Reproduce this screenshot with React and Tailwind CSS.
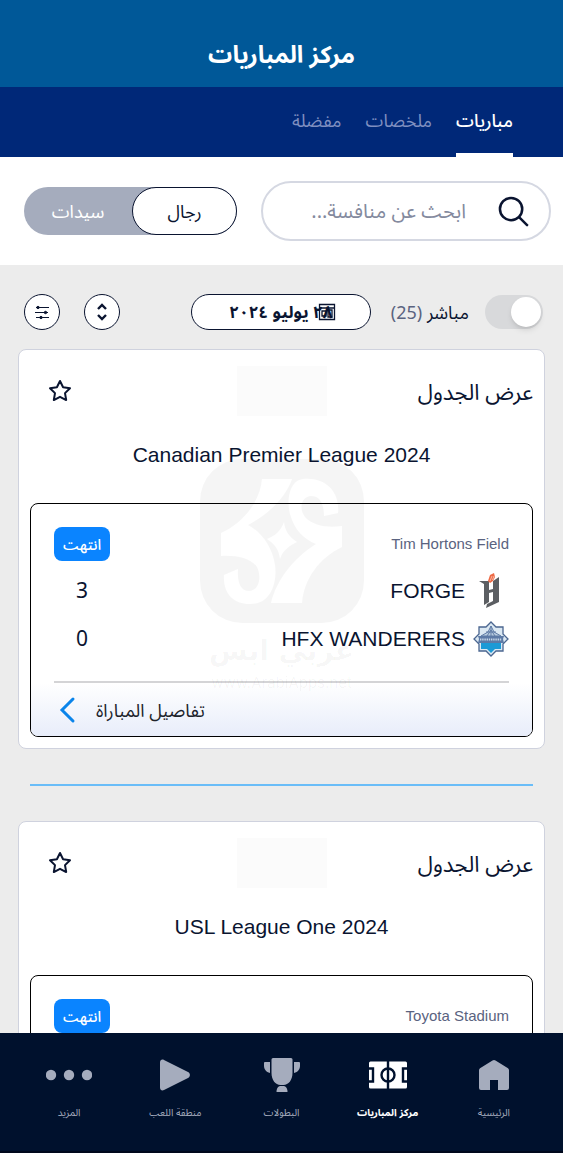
import { useState } from "react";

const tabs = ["مباريات", "ملخصات", "مفضلة"];

const leagues = [
    {
        name: "Canadian Premier League 2024",
        venue: "Tim Hortons Field",
        teams: [
            { name: "FORGE", score: "3", logo: <ForgeLogo /> },
            { name: "HFX WANDERERS", score: "0", logo: <WanderersLogo /> },
        ],
    },
    {
        name: "USL League One 2024",
        venue: "Toyota Stadium",
        teams: [],
    },
];

const navItems = [
    { label: "الرئيسية", icon: <HomeIcon /> },
    { label: "مركز المباريات", icon: <PitchIcon />, active: true },
    { label: "البطولات", icon: <TrophyIcon /> },
    { label: "منطقة اللعب", icon: <PlayIcon /> },
    { label: "المزيد", icon: <MoreIcon /> },
];

function ForgeLogo() {
    return (
        <svg viewBox="0 0 36 36" className="size-9" aria-hidden="true">
            <path d="M6 8h10v9l4-1V8l6-4v25l-13 6 1-4 6-3v-9l-4 1v9l-5 3V11z" fill="#5b5e62" />
            <path d="M15 8l2-6 4-2 1 4-2 4-3 2z" fill="#ee6a45" />
            <path d="M17 8l2-5M19.500 7l1.500-4" stroke="#fff" strokeWidth="0.5" />
        </svg>
    );
}

function WanderersLogo() {
    return (
        <svg viewBox="0 0 36 36" className="size-9" aria-hidden="true">
            <path
                d="M18 1l5 5h7v7l5 5-5 5v7h-7l-5 5-5-5H6v-7l-5-5 5-5V6h7z"
                fill="#dbe8f2"
                stroke="#4b6690"
                strokeWidth="1.3"
            />
            <path d="M8 22h20v6h-6l-4 4-4-4H8z" fill="#1c9ad6" />
            <path d="M8 15l7-4 3-6 3 6 7 4zM13 11h10M18 5v10M14 15l4-6 4 6" fill="#b9cde0" stroke="#5f7ba5" strokeWidth="1" />
            <path d="M5 15h26l-1 3 1 4H5l1-4z" fill="#5d7aa6" />
            <path d="M7 18.500h22" stroke="#c5d5e6" strokeWidth="2" strokeDasharray="1.400 0.800" />
        </svg>
    );
}

function HomeIcon() {
    return (
        <svg viewBox="0 0 32 32" className="h-8 w-8" fill="currentColor" aria-hidden="true">
            <path d="M14.500 1.400a3 3 0 0 1 3 0L30 9.200a2.500 2.500 0 0 1 1 2V29a2 2 0 0 1-2 2h-9V21h-8v10H3a2 2 0 0 1-2-2V11.200a2.500 2.500 0 0 1 1-2z" />
        </svg>
    );
}

function PitchIcon() {
    return (
        <svg viewBox="0 0 40 28" className="h-7 w-10" aria-hidden="true">
            <rect x="1" y="0.500" width="38" height="27" rx="1.500" fill="#fff" />
            <g fill="none" stroke="#00112d" strokeWidth="2.4">
                <path d="M20 0v28M0 7.500h5v13H0M40 7.500h-5v13h5" />
                <circle cx="20" cy="14" r="6.500" />
            </g>
        </svg>
    );
}

function TrophyIcon() {
    return (
        <svg viewBox="0 0 38 36" className="h-9 w-[38px]" fill="currentColor" aria-hidden="true">
            <path d="M10 1h18a1.500 1.500 0 0 1 1.500 1.500V16c0 7-4 12-9 12h-3c-5 0-9-5-9-12V2.500A1.500 1.500 0 0 1 10 1z" />
            <path d="M1 6a1 1 0 0 1 1-1h5v11C3 15 1 12 1 9zM37 6a1 1 0 0 0-1-1h-5v11c4-1 6-4 6-7z" />
            <path d="M13.500 35c0-4 2-6 4-6h3c2 0 4 2 4 6z" />
        </svg>
    );
}

function PlayIcon() {
    return (
        <svg viewBox="0 0 32 32" className="h-8 w-8" fill="currentColor" aria-hidden="true">
            <path d="M1 3.500C1 1 3 0 5 1l24 12c2.600 1.300 2.600 4.700 0 6L5 31c-2 1-4 0-4-2.500z" />
        </svg>
    );
}

function MoreIcon() {
    return (
        <svg viewBox="0 0 46 12" className="h-3 w-[46px]" fill="currentColor" aria-hidden="true">
            <circle cx="5" cy="6" r="5.200" />
            <circle cx="23" cy="6" r="5.200" />
            <circle cx="41" cy="6" r="5.200" />
        </svg>
    );
}

const Watermark = () => (
    <div className="pointer-events-none absolute inset-0 flex flex-col items-center justify-center pb-1 text-black/4">
        <svg viewBox="0 0 164 164" className="size-41" fill="currentColor" aria-hidden="true">
            <path
                fillRule="evenodd"
                d="M42 0h80a42 42 0 0 1 42 42v80a42 42 0 0 1-42 42H42a42 42 0 0 1-42-42V42A42 42 0 0 1 42 0zM62 20c-2 25-22 46-41 54v23c15-1 30 2 36 11 5 10 2 24-8 24-9 0-12-10-11-22l-14 6c-1 18 9 29 26 29 23 0 27-25 25-39-3-19-14-33-27-40 20-11 37-26 44-46zM103 20c-15 2-16 24-13 35 5 17 14 25 26 30-22 14-39 35-45 59h31c2-24 17-45 40-56V67c-14 2-29 0-37-9-7-9-3-21 6-21 10 0 13 9 13 20l14-3c2-22-13-36-35-34zM84 63c-3 9-9 14-17 17 8 5 12 11 13 20 3-9 9-13 17-17-8-5-12-11-13-20z"
            />
        </svg>
        <p className="mt-1 font-['DejaVu_Sans',sans-serif] text-[28px] leading-12 font-bold">عربي ابس</p>
        <p className="font-['Inter',sans-serif] text-[15px] leading-4" dir="ltr">www.ArabiApps.net</p>
    </div>
);

const LeagueCard = ({ league }) => {
    const [starred, setStarred] = useState(false);

    return (
        <section className="rounded-lg border border-[#cfd2de] bg-white px-[11px] pt-4 pb-[11px]">
            <div className="flex h-[50px] items-center justify-between">
                <a href="#table" className="w-32 text-[22px]">عرض الجدول</a>
                <div className="h-full w-[90px] bg-[#fbfbfb]" />
                <div className="flex w-32 justify-end pl-[18px]">
                    <button type="button" aria-label="إضافة إلى المفضلة" aria-pressed={starred} onClick={() => setStarred(!starred)}>
                        <svg viewBox="0 0 24 24" className="size-6" fill={starred ? "currentColor" : "none"} stroke="currentColor" strokeWidth="2" strokeLinejoin="round">
                            <path d="M12 2l3.090 6.260 6.910 1.010-5 4.870 1.180 6.880L12 17.770l-6.180 3.250L7 14.140 2 9.270l6.910-1.010z" />
                        </svg>
                    </button>
                </div>
            </div>
            <h2 className="mt-[23px] text-center font-['Liberation_Sans',sans-serif] text-[21px] leading-8" dir="ltr">{league.name}</h2>

            <div className="mt-8 overflow-hidden rounded-lg border border-black">
                <div className="px-[23px] pt-[23px]">
                    <div className="flex items-center justify-between">
                        <p className="font-['Liberation_Sans',sans-serif] text-[15px] text-[#5a6380]">{league.venue}</p>
                        <span className="flex h-[34px] w-14 items-center justify-center rounded-lg bg-[#0a84ff] text-[15px] font-medium text-white">انتهت</span>
                    </div>
                    <div className="mt-3 flex min-h-20 flex-col gap-3">
                        {league.teams.map((team) => (
                            <div key={team.name} className="flex h-9 items-center gap-2">
                                {team.logo}
                                <span className="font-['Liberation_Sans',sans-serif] text-[21px]">{team.name}</span>
                                <span className="mr-auto w-14 text-center text-[21px]">{team.score}</span>
                            </div>
                        ))}
                    </div>
                </div>
                <div className="mx-[23px] mt-6 border-t-2 border-[#d4d4d6]" />
                <a href="#details" className="flex h-[53px] items-center justify-end gap-3.5 bg-linear-to-b from-white to-[#e8edfa] px-[23px] text-lg text-[#20232b]">
                    تفاصيل المباراة
                    <svg viewBox="0 0 28 28" className="size-7" fill="none" stroke="#0a84ea" strokeWidth="3" strokeLinecap="round" aria-hidden="true">
                        <path d="M19 3L8 14l11 11" />
                    </svg>
                </a>
            </div>
        </section>
    );
};

const App = () => {
    const [tab, setTab] = useState(tabs[0]);
    const [group, setGroup] = useState("رجال");
    const [live, setLive] = useState(false);

    return (
        <div dir="rtl" lang="ar" className="relative flex h-screen flex-col overflow-hidden bg-[#ececec] font-['Noto_Sans','Noto_Sans_Arabic',sans-serif] text-[#0a1430]">
            <header className="shrink-0">
                <div className="flex h-[87px] items-center justify-center bg-[#005898] pt-5">
                    <h1 className="text-2xl font-bold text-white">مركز المباريات</h1>
                </div>
                <nav className="flex h-[70px] gap-6 bg-[#002878] px-[50px]">
                    {tabs.map((item) => (
                        <button
                            key={item}
                            type="button"
                            onClick={() => setTab(item)}
                            className={`border-b-4 text-lg ${item === tab ? "border-white font-medium text-white" : "border-transparent text-[#7f8fc0]"}`}
                        >
                            {item}
                        </button>
                    ))}
                </nav>
            </header>

            <div className="flex shrink-0 items-center gap-6 bg-white py-6 pr-3 pl-6">
                <label className="flex h-[60px] min-w-0 flex-1 items-center gap-8 rounded-full border-2 border-[#d5d8e2] px-5">
                    <svg viewBox="0 0 32 32" className="size-[31px] shrink-0" fill="none" stroke="currentColor" strokeWidth="2.6" strokeLinecap="round" aria-hidden="true">
                        <circle cx="13.500" cy="13.500" r="11.500" />
                        <path d="M22 22l8 8" />
                    </svg>
                    <input type="text" aria-label="بحث" placeholder="ابحث عن منافسة..." className="w-full min-w-0 text-xl outline-none placeholder:text-[#848a9e]" />
                </label>
                <div className="flex h-12 shrink-0 rounded-full bg-[#a5acbd] text-lg">
                    {["رجال", "سيدات"].map((item) => (
                        <button
                            key={item}
                            type="button"
                            aria-pressed={item === group}
                            onClick={() => setGroup(item)}
                            className={`rounded-full ${item === group ? "w-[105px] border border-[#0a1430] bg-white" : "w-27 text-white"}`}
                        >
                            {item}
                        </button>
                    ))}
                </div>
            </div>

            <main className="min-h-0 flex-1 overflow-y-auto [scrollbar-width:none]">
                <div className="flex items-center px-5 pt-[29px] pl-6">
                    <label className="flex items-center gap-4 text-lg">
                        <input type="checkbox" checked={live} onChange={() => setLive(!live)} className="peer sr-only" />
                        <span className={`flex h-[34px] w-[58px] items-center rounded-full p-0.5 ${live ? "justify-end bg-[#0a84ff]" : "bg-[#d8d9db]"}`}>
                            <span className="size-[30px] rounded-full bg-white shadow-md" />
                        </span>
                        <span>مباشر <span className="text-[#5a6380]">(25)</span></span>
                    </label>
                    <button type="button" className="relative mr-5 flex h-9 w-[180px] items-center justify-center rounded-full border border-[#0a1430] bg-white text-[17px] font-bold">
                        ٢٨ يوليو ٢٠٢٤
                        <svg viewBox="0 0 18 18" className="absolute right-[34px] size-[18px]" fill="none" stroke="currentColor" strokeWidth="1.300" aria-hidden="true">
                            <path d="M1.500 1.500h15v15h-15zM1.500 5h15M4 8h4v5H4zM10 7h4v7h-4z" />
                        </svg>
                    </button>
                    <div className="mr-auto flex gap-6">
                        <button type="button" aria-label="ترتيب" className="flex size-9 items-center justify-center rounded-full border border-[#0a1430] bg-white">
                            <svg viewBox="0 0 20 20" className="size-5" fill="none" stroke="currentColor" strokeWidth="2.4">
                                <path d="M6 7l4-4 4 4M6 13l4 4 4-4" />
                            </svg>
                        </button>
                        <button type="button" aria-label="تصفية" className="flex size-9 items-center justify-center rounded-full border border-[#0a1430] bg-white">
                            <svg viewBox="0 0 16 16" className="size-4" fill="currentColor" stroke="currentColor" strokeWidth="1">
                                <path d="M2 3.500h13M1 8.500h13M2 13.500h13" />
                                <circle cx="4" cy="3.500" r="1.200" />
                                <circle cx="11.500" cy="8.500" r="1.200" />
                                <circle cx="7" cy="13.500" r="1.200" />
                            </svg>
                        </button>
                    </div>
                </div>

                <div className="mt-[19px] px-[18px]">
                    {leagues.map((league, index) => (
                        <div key={league.name}>
                            {index > 0 && <hr className="mx-3 my-[35px] border-t-2 border-[#6abdf8]" />}
                            <LeagueCard league={league} />
                        </div>
                    ))}
                </div>
            </main>

            <nav className="grid h-30 shrink-0 grid-cols-5 border-b-2 border-[#00081c] bg-[#00112d] px-4">
                {navItems.map((item) => (
                    <a key={item.label} href="#nav" className={`flex flex-col items-center pt-6 text-[10px] ${item.active ? "font-bold text-white" : "text-[#a5acbd]"}`}>
                        <span className="flex h-9 items-center">{item.icon}</span>
                        <span className="mt-[11px] leading-4 whitespace-nowrap">{item.label}</span>
                    </a>
                ))}
            </nav>

            <Watermark />
        </div>
    );
};

export default App;
